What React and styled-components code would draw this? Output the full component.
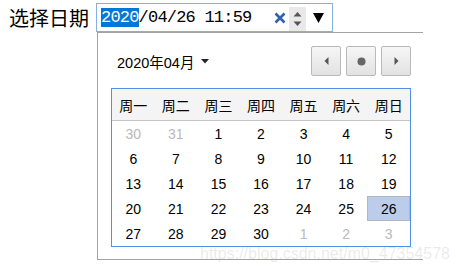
import React from 'react';
import styled, { createGlobalStyle } from 'styled-components';

const GlobalStyle = createGlobalStyle`
  body {
    margin: 0;
    background: #fff;
    font-family: "Liberation Sans", "Noto Sans CJK SC", sans-serif;
  }
`;

const Page = styled.div`
  position: relative;
  width: 457px;
  height: 274px;
  display: flex;
  align-items: flex-start;
  padding: 3px 0 0 9px;
  box-sizing: border-box;
  overflow: hidden;
`;

const Label = styled.div`
  width: 80px;
  margin-right: 7px;
  font-family: "Noto Sans CJK SC", sans-serif;
  font-size: 20px;
  line-height: 29px;
  color: #000;
`;

const Picker = styled.div`
  display: flex;
  flex-direction: column;
`;

const Input = styled.div`
  width: 237px;
  height: 29px;
  box-sizing: border-box;
  border: 1px solid #86b0e2;
  display: flex;
  align-items: center;
  padding: 0 8px 0 4px;
`;

const Value = styled.div`
  font-family: "Liberation Mono", monospace;
  font-size: 17px;
  letter-spacing: -0.8px;
  line-height: 18px;
  color: #000;
  white-space: pre;
`;

const Selected = styled.span`
  background: #0078d7;
  color: #fff;
`;

const Controls = styled.div`
  margin-left: auto;
  display: flex;
  align-items: center;
`;

const Spin = styled.div`
  width: 17px;
  height: 24px;
  margin: 2px 7px 0 3px;
  background: #e9e9e9;
  display: flex;
`;

const Popup = styled.div`
  margin-left: 1px;
  width: 326px;
  box-sizing: border-box;
  border: 1px solid #a3a3a3;
  border-right: none;
  padding: 13px 12px 12px 13px;
`;

const Head = styled.div`
  display: flex;
  align-items: center;
  justify-content: space-between;
  height: 30px;
`;

const Month = styled.div`
  display: flex;
  align-items: center;
  gap: 7px;
  padding-left: 6px;
  font-size: 14.5px;
  color: #000;
`;

const Nav = styled.div`
  display: flex;
  gap: 5px;
`;

const NavButton = styled.div`
  width: 30px;
  height: 30px;
  box-sizing: border-box;
  border: 1px solid #b9b9b9;
  border-radius: 2px;
  background: linear-gradient(#f6f6f6, #e2e2e2);
  display: flex;
  align-items: center;
  justify-content: center;
`;

const Table = styled.div`
  margin-top: 12px;
  width: 300px;
  box-sizing: border-box;
  border: 1px solid #4f8fe6;
  display: grid;
  grid-template-columns: repeat(7, 1fr);
  grid-template-rows: 32px;
  grid-auto-rows: 25px;
`;

const WeekDay = styled.div`
  background: #f4f4f4;
  border-bottom: 1px solid #c4c4c4;
  display: flex;
  align-items: center;
  justify-content: center;
  font-family: "Noto Sans CJK SC", sans-serif;
  font-size: 14px;
  color: #000;
`;

const Day = styled.div`
  display: flex;
  align-items: center;
  justify-content: center;
  box-sizing: border-box;
  font-size: 14px;
  color: ${p => (p.$muted ? '#b9b9b9' : '#000')};
  background: ${p => (p.$active ? '#bccdec' : 'transparent')};
  border: 1px solid ${p => (p.$active ? '#b0b6c2' : 'transparent')};
`;

const Watermark = styled.div`
  position: absolute;
  left: 200px;
  top: 245px;
  font-size: 16px;
  color: rgba(120, 120, 120, 0.16);
  white-space: nowrap;
  pointer-events: none;
`;

const weekdays = ['周一', '周二', '周三', '周四', '周五', '周六', '周日'];

const days = [
  [30, 1], [31, 1], [1], [2], [3], [4], [5],
  [6], [7], [8], [9], [10], [11], [12],
  [13], [14], [15], [16], [17], [18], [19],
  [20], [21], [22], [23], [24], [25], [26, 0, 1],
  [27], [28], [29], [30], [1, 1], [2, 1], [3, 1],
];

const App = () => (
  <Page>
    <GlobalStyle />
    <Label>选择日期</Label>
    <Picker>
      <Input>
        <Value><Selected>2020</Selected>/04/26 11:59</Value>
        <Controls>
          <svg width="12" height="12" viewBox="0 0 12 12">
            <path d="M1.5 1.5 L10.5 10.5 M10.5 1.5 L1.5 10.5" stroke="#2f62ad" strokeWidth="2.6" />
          </svg>
          <Spin>
            <svg width="17" height="24" viewBox="0 0 17 24">
              <path d="M4.5 9.5 L8.5 5 L12.5 9.5 Z" fill="#555" />
              <path d="M4.5 14.5 L8.5 19 L12.5 14.5 Z" fill="#555" />
            </svg>
          </Spin>
          <svg width="11" height="10" viewBox="0 0 11 10">
            <polygon points="0,0 11,0 5.5,10" fill="#000" />
          </svg>
        </Controls>
      </Input>
      <Popup>
        <Head>
          <Month>
            2020年04月
            <svg width="8" height="5" viewBox="0 0 8 5">
              <polygon points="0,0 8,0 4,4.5" fill="#222" />
            </svg>
          </Month>
          <Nav>
            <NavButton>
              <svg width="5" height="8" viewBox="0 0 5 8">
                <polygon points="4.5,0 4.5,8 0.5,4" fill="#555" />
              </svg>
            </NavButton>
            <NavButton>
              <svg width="9" height="9" viewBox="0 0 9 9">
                <circle cx="4.5" cy="4.5" r="4" fill="#666" />
              </svg>
            </NavButton>
            <NavButton>
              <svg width="5" height="8" viewBox="0 0 5 8">
                <polygon points="0.5,0 0.5,8 4.5,4" fill="#555" />
              </svg>
            </NavButton>
          </Nav>
        </Head>
        <Table>
          {weekdays.map(w => <WeekDay key={w}>{w}</WeekDay>)}
          {days.map(([n, muted, active], i) => (
            <Day key={i} $muted={!!muted} $active={!!active}>{n}</Day>
          ))}
        </Table>
      </Popup>
    </Picker>
    <Watermark>https://blog.csdn.net/m0_47354578</Watermark>
  </Page>
);

export default App;
